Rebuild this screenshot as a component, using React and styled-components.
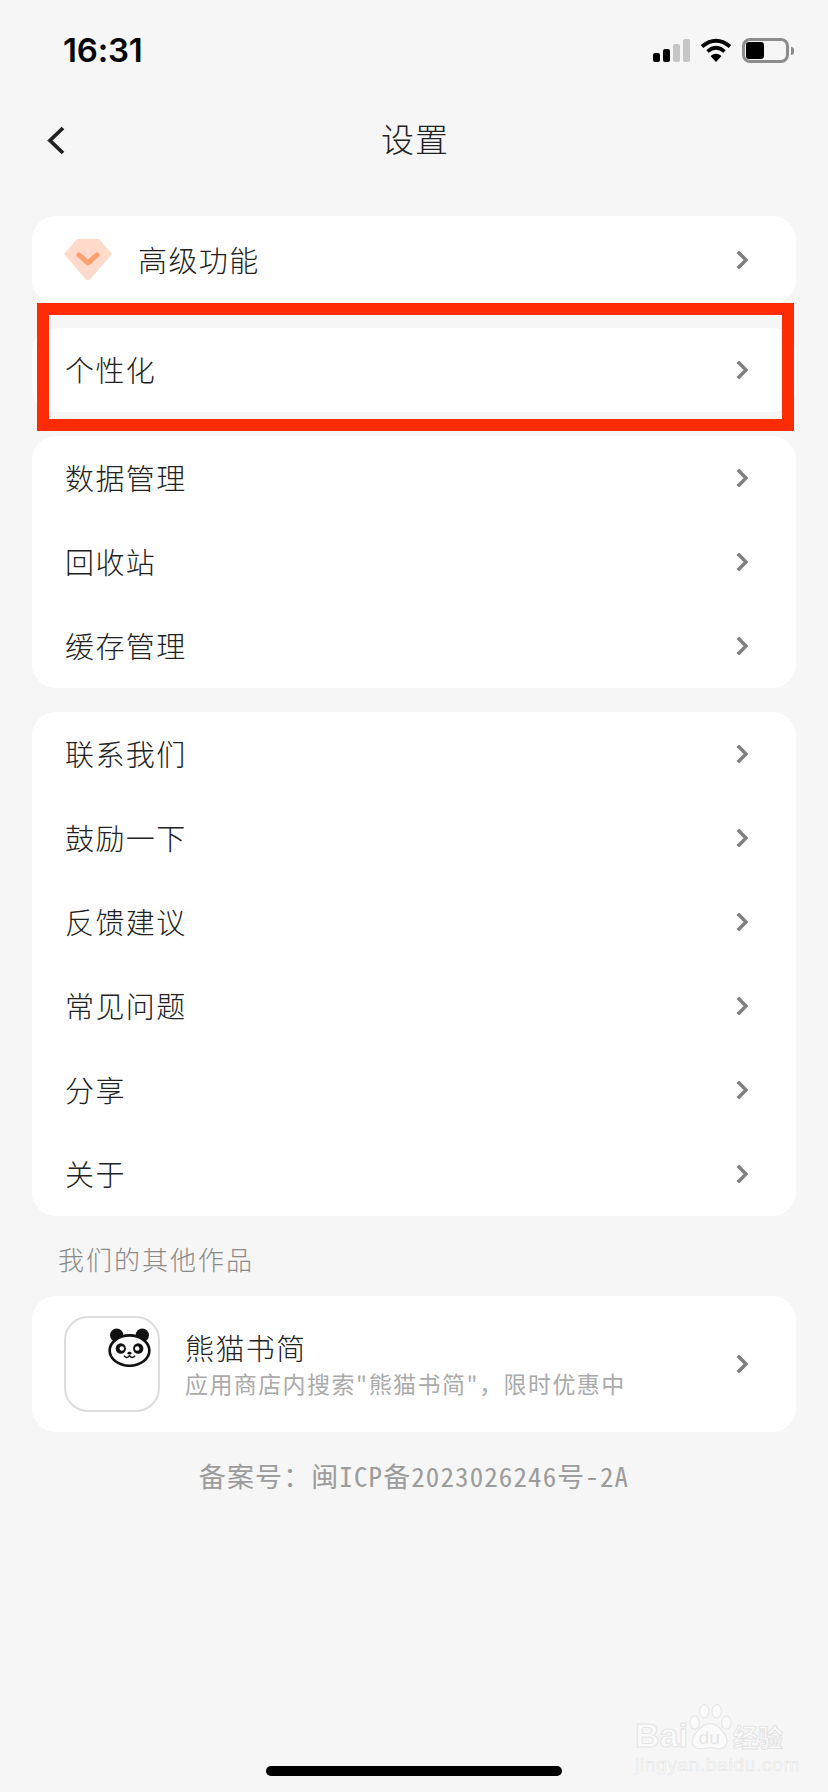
import React from "react";
import styled, { createGlobalStyle } from "styled-components";

const GlobalStyle = createGlobalStyle`
  html, body {
    margin: 0;
    padding: 0;
    background: #f6f6f6;
  }
  * {
    box-sizing: border-box;
  }
`;

const cjk = `"Noto Sans CJK SC", sans-serif`;
const monoCjk = `"Noto Sans Mono CJK SC", "Liberation Mono", "Noto Sans CJK SC", monospace`;

const rowsData = ["数据管理", "回收站", "缓存管理"];
const moreRows = ["联系我们", "鼓励一下", "反馈建议", "常见问题", "分享", "关于"];

function Chevron() {
  return (
    <ChevronSvg viewBox="0 0 12 20">
      <path d="M1.8 1.8 L10 10 L1.8 18.2" fill="none" stroke="#808080" strokeWidth="3.6" />
    </ChevronSvg>
  );
}

function Diamond() {
  return (
    <svg width="48" height="42" viewBox="0 0 48 42">
      <path
        d="M13 0 H35 L48 15 L26 40.5 Q24 42 22 40.5 L0 15 Z"
        fill="#ffd9ca"
      />
      <path
        d="M15 16 L24 24 L33 16"
        fill="none"
        stroke="#ff9f6c"
        strokeWidth="5"
        strokeLinecap="round"
        strokeLinejoin="round"
      />
    </svg>
  );
}

function Panda() {
  return (
    <svg width="43" height="39" viewBox="0 0 42 38">
      <circle cx="8.5" cy="7" r="6.5" fill="#111" />
      <circle cx="33.5" cy="7" r="6.5" fill="#111" />
      <ellipse cx="21" cy="22" rx="19.4" ry="14.8" fill="#fff" stroke="#111" strokeWidth="2.6" />
      <ellipse cx="12.5" cy="20" rx="5" ry="5.2" fill="#111" />
      <ellipse cx="29.5" cy="20" rx="5" ry="5.2" fill="#111" />
      <circle cx="13.5" cy="20" r="2.2" fill="#fff" />
      <circle cx="28.5" cy="20" r="2.2" fill="#fff" />
      <ellipse cx="21" cy="24.5" rx="2" ry="1.4" fill="#111" />
      <path d="M15.5 27 Q18 30.5 21 27 Q24 30.5 26.5 27" fill="none" stroke="#111" strokeWidth="1.4" />
    </svg>
  );
}

function App() {
  return (
    <Page>
      <GlobalStyle />
      <StatusBar>
        <Clock>16:31</Clock>
        <StatusIcons>
          <Signal>
            <SignalBar $h={9} />
            <SignalBar $h={13} />
            <SignalBar $h={18} $off />
            <SignalBar $h={23} $off />
          </Signal>
          <svg width="32" height="24" viewBox="0 0 32 24">
            <path d="M2 8.5 Q16 -3 30 8.5" fill="none" stroke="#000" strokeWidth="4" />
            <path d="M7.5 13.5 Q16 6 24.5 13.5" fill="none" stroke="#000" strokeWidth="3.6" />
            <path d="M10.5 18 L16 24 L21.5 18 Q16 13.5 10.5 18 Z" fill="#000" />
          </svg>
          <Battery>
            <BatteryFill />
            <BatteryTip />
          </Battery>
        </StatusIcons>
      </StatusBar>

      <Header>
        <BackIcon viewBox="0 0 18 29">
          <path d="M16 2 L3 14.5 L16 27" fill="none" stroke="#222" strokeWidth="3.8" />
        </BackIcon>
        <Title>设置</Title>
      </Header>

      <List>
        <Card>
          <Row $tall>
            <Diamond />
            <PremiumLabel>高级功能</PremiumLabel>
            <Chevron />
          </Row>
        </Card>

        <Card>
          <Row>
            <Label>个性化</Label>
            <Chevron />
          </Row>
          <Highlight />
        </Card>

        <Card>
          {rowsData.map((name) => (
            <Row key={name}>
              <Label>{name}</Label>
              <Chevron />
            </Row>
          ))}
        </Card>

        <Card>
          {moreRows.map((name) => (
            <Row key={name}>
              <Label>{name}</Label>
              <Chevron />
            </Row>
          ))}
        </Card>
      </List>

      <SectionTitle>我们的其他作品</SectionTitle>

      <ProductCard>
        <AppIcon>
          <Panda />
        </AppIcon>
        <ProductText>
          <ProductName>熊猫书简</ProductName>
          <ProductDesc>应用商店内搜索"熊猫书简"，限时优惠中</ProductDesc>
        </ProductText>
        <Chevron />
      </ProductCard>

      <Footer>备案号：闽ICP备2023026246号-2A</Footer>

      <HomeBar />

      <Watermark>
        <WatermarkTop>
          <WatermarkBrand>Bai</WatermarkBrand>
          <svg width="44" height="47" viewBox="0 0 46 48">
            <g fill="#fafafa" stroke="#e6e6e6" strokeWidth="1.2">
              <ellipse cx="7" cy="19" rx="5" ry="7" />
              <ellipse cx="17" cy="7" rx="5" ry="7" />
              <ellipse cx="30" cy="7" rx="5" ry="7" />
              <ellipse cx="40" cy="19" rx="5" ry="7" />
              <path d="M23 20 C32 20 44 34 40 42 C36 49 28 45 23 45 C18 45 9 49 5 42 C2 34 14 20 23 20 Z" />
            </g>
            <text x="11" y="41" fontSize="20" fontFamily="Liberation Sans" fill="#e6e6e6">du</text>
          </svg>
          <WatermarkCn>经验</WatermarkCn>
        </WatermarkTop>
        <WatermarkUrl>jingyan.baidu.com</WatermarkUrl>
      </Watermark>
    </Page>
  );
}

const Page = styled.div`
  position: relative;
  width: 828px;
  height: 1792px;
  overflow: hidden;
  display: flex;
  flex-direction: column;
  background: #f6f6f6;
  font-family: ${cjk};
`;

const StatusBar = styled.div`
  height: 100px;
  display: flex;
  align-items: center;
  justify-content: space-between;
  padding: 0 39px 0 63px;
`;

const Clock = styled.div`
  font-family: Inter, "Liberation Sans", sans-serif;
  font-size: 33px;
  font-weight: 600;
  letter-spacing: -0.2px;
  color: #000;
`;

const StatusIcons = styled.div`
  display: flex;
  align-items: center;
  gap: 10px;
`;

const Signal = styled.div`
  display: flex;
  align-items: flex-end;
  gap: 3px;
  height: 23px;
`;

const SignalBar = styled.div`
  width: 7px;
  height: ${(p) => p.$h}px;
  border-radius: 2px;
  background: ${(p) => (p.$off ? "#c6c6c6" : "#000")};
`;

const Battery = styled.div`
  position: relative;
  width: 47px;
  height: 25px;
  border: 3px solid #8c8c8c;
  border-radius: 8px;
  padding: 1px;
`;

const BatteryFill = styled.div`
  width: 18px;
  height: 17px;
  background: #000;
  border-radius: 3px;
`;

const BatteryTip = styled.div`
  position: absolute;
  right: -8px;
  top: 6px;
  width: 3px;
  height: 8px;
  background: #8c8c8c;
  border-radius: 0 3px 3px 0;
`;

const Header = styled.div`
  position: relative;
  height: 80px;
  display: flex;
  align-items: center;
  justify-content: center;
  padding: 0 0 4px 2px;
`;

const BackIcon = styled.svg`
  position: absolute;
  left: 47px;
  top: 26px;
  width: 18px;
  height: 29px;
`;

const Title = styled.div`
  font-size: 33px;
  font-weight: 300;
  letter-spacing: 1px;
  color: #222;
`;

const List = styled.div`
  display: flex;
  flex-direction: column;
  gap: 24px;
  margin: 36px 32px 0;
`;

const Card = styled.div`
  position: relative;
  background: #fff;
  border-radius: 24px;
`;

const Row = styled.div`
  height: ${(p) => (p.$tall ? 88 : 84)}px;
  display: flex;
  align-items: center;
  justify-content: space-between;
  padding: 0 48px 0 ${(p) => (p.$tall ? 32 : 33)}px;
`;

const Label = styled.div`
  flex: 1;
  font-size: 29px;
  line-height: 36px;
  margin-bottom: 2px;
  font-weight: 300;
  letter-spacing: 1.4px;
  color: #222;
`;

const PremiumLabel = styled(Label)`
  margin-left: 26px;
`;

const ChevronSvg = styled.svg`
  width: 12px;
  height: 20px;
  flex-shrink: 0;
`;

const Highlight = styled.div`
  position: absolute;
  top: -25px;
  bottom: -19px;
  left: 5px;
  right: 2px;
  border: 12px solid #ff2b04;
`;

const SectionTitle = styled.div`
  margin: 27px 0 0 58px;
  height: 53px;
  font-size: 26px;
  line-height: 32px;
  font-weight: 300;
  letter-spacing: 2px;
  color: #8a8a8a;
`;

const ProductCard = styled.div`
  height: 136px;
  margin: 0 32px;
  display: flex;
  align-items: center;
  padding: 0 48px 0 32px;
  background: #fff;
  border-radius: 24px;
`;

const AppIcon = styled.div`
  width: 96px;
  height: 96px;
  flex-shrink: 0;
  display: flex;
  justify-content: flex-end;
  padding: 10px 7px 0 0;
  border: 2px solid #dcdcdc;
  border-radius: 24px;
`;

const ProductText = styled.div`
  flex: 1;
  margin: 0 0 3px 25px;
  display: flex;
  flex-direction: column;
  gap: 2px;
`;

const ProductName = styled.div`
  font-size: 29px;
  line-height: 38px;
  font-weight: 300;
  letter-spacing: 1.4px;
  color: #222;
`;

const ProductDesc = styled.div`
  font-family: ${monoCjk};
  font-size: 23px;
  line-height: 30px;
  letter-spacing: 1.4px;
  color: #aaa;
`;

const Footer = styled.div`
  margin-top: 26px;
  text-align: center;
  font-family: ${monoCjk};
  font-size: 27px;
  line-height: 36px;
  letter-spacing: 1.1px;
  color: #9c9c9c;
`;

const HomeBar = styled.div`
  width: 296px;
  height: 10px;
  margin: auto auto 16px;
  background: #000;
  border-radius: 5px;
`;

const Watermark = styled.div`
  position: absolute;
  left: 635px;
  top: 1703px;
  width: 148px;
`;

const WatermarkTop = styled.div`
  display: flex;
  align-items: flex-end;
  height: 48px;
`;

const WatermarkBrand = styled.div`
  font-family: "Liberation Sans", sans-serif;
  font-size: 34px;
  line-height: 32px;
  font-weight: 700;
  color: #fafafa;
  -webkit-text-stroke: 1px #e4e4e4;
`;

const WatermarkCn = styled.div`
  margin-left: 1px;
  font-size: 25px;
  line-height: 30px;
  font-weight: 700;
  white-space: nowrap;
  color: #fafafa;
  -webkit-text-stroke: 1px #e4e4e4;
`;

const WatermarkUrl = styled.div`
  margin-top: 4px;
  font-family: "Liberation Sans", sans-serif;
  font-size: 19px;
  line-height: 20px;
  letter-spacing: 0.7px;
  white-space: nowrap;
  color: #fafafa;
  -webkit-text-stroke: 0.6px #e6e6e6;
`;

export default App;
